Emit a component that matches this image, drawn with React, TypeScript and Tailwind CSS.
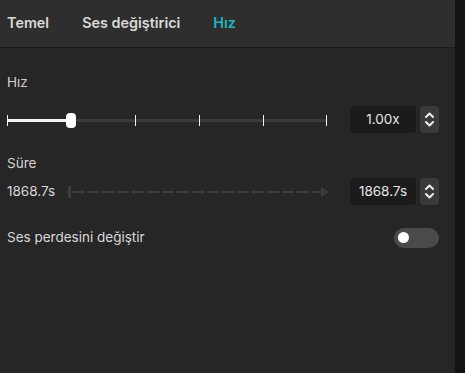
import React, { useState } from 'react';

const TICKS = [0, 1, 2, 3, 4, 5];

const Stepper = () => (
    <div className="w-[19px] h-[27px] rounded-[4px] bg-[#3a3a3a] flex items-center justify-center">
        <svg width="11" height="17" viewBox="0 0 11 17" fill="none" stroke="#f0f0f0" strokeWidth="2" strokeLinecap="round" strokeLinejoin="round">
            <path d="M2 6 L5.5 2.5 L9 6" />
            <path d="M2 11 L5.5 14.5 L9 11" />
        </svg>
    </div>
);

const ValueBox = ({ value }: { value: string }) => (
    <div className="flex items-center gap-[4px]">
        <div className="w-[66px] h-[27px] rounded-[4px] bg-[#1b1b1b] flex items-center justify-center text-[13.5px] text-[#e6e6e6]">
            {value}
        </div>
        <Stepper />
    </div>
);

export default function App() {
    const [tab] = useState('Hız');
    const [speed] = useState(1);
    const thumbPos = 64; // px from track start

    return (
        <div className="flex h-screen w-full bg-[#131313]" style={{ fontFamily: 'Inter, "Noto Sans", sans-serif' }}>
            <div className="w-[455px] flex flex-col bg-[#262626]">
                {/* Tabs */}
                <div className="h-[48px] shrink-0 bg-[#2e2e2e] border-b border-[#1b1b1b] flex items-center gap-[33px] pl-[7px] pb-[1px]">
                    {['Temel', 'Ses değiştirici', 'Hız'].map(t => (
                        <span
                            key={t}
                            className={`text-[14.4px] font-semibold ${t === tab ? 'text-[#1db7c4]' : 'text-[#dadada]'}`}
                        >
                            {t}
                        </span>
                    ))}
                </div>

                <div className="flex flex-col pl-[7px] pr-[16px] pt-[25px]">
                    {/* Speed */}
                    <div className="text-[13.5px] text-[#d2d2d2] leading-[18px]">Hız</div>
                    <div className="flex items-center mt-[15px] h-[27px]">
                        <div className="relative w-[320px] h-[16px]">
                            <div className="absolute left-0 right-0 top-[7px] h-[3px] bg-[#3a3a3a]" />
                            <div className="absolute left-0 top-[7px] h-[3px] bg-[#f2f2f2]" style={{ width: thumbPos }} />
                            {TICKS.map(i => (
                                <div
                                    key={i}
                                    className="absolute top-[3px] w-[1px] h-[11px] bg-[#f2f2f2]"
                                    style={{ left: i === 5 ? 319 : i * 64 }}
                                />
                            ))}
                            <div className="absolute top-[1px] w-[10px] h-[15px] rounded-[4px] bg-white" style={{ left: thumbPos - 5 }} />
                        </div>
                        <div className="ml-auto">
                            <ValueBox value={`${speed.toFixed(2)}x`} />
                        </div>
                    </div>

                    {/* Duration */}
                    <div className="text-[13.5px] text-[#d2d2d2] leading-[18px] mt-[21px]">Süre</div>
                    <div className="flex items-center mt-[6px] h-[27px]">
                        <span className="text-[13.5px] text-[#d8d8d8] w-[61px]">1868.7s</span>
                        <svg width="262" height="14" viewBox="0 0 262 14">
                            <rect x="0" y="1" width="3" height="12" fill="#3c3c3c" />
                            <line x1="4" y1="7" x2="254" y2="7" stroke="#3c3c3c" strokeWidth="2" strokeDasharray="12 3" />
                            <path d="M253 2 L261 7 L253 12 Z" fill="#3c3c3c" />
                        </svg>
                        <div className="ml-auto">
                            <ValueBox value="1868.7s" />
                        </div>
                    </div>

                    {/* Pitch */}
                    <div className="flex items-center justify-between mt-[22px] h-[21px]">
                        <span className="text-[13.5px] text-[#d8d8d8]">Ses perdesini değiştir</span>
                        <div className="w-[45px] h-[20px] rounded-full bg-[#4a4a4a] flex items-center pl-[4px]">
                            <div className="w-[11px] h-[11px] rounded-full bg-white" />
                        </div>
                    </div>
                </div>
            </div>
            <div className="flex-1" />
        </div>
    );
}
